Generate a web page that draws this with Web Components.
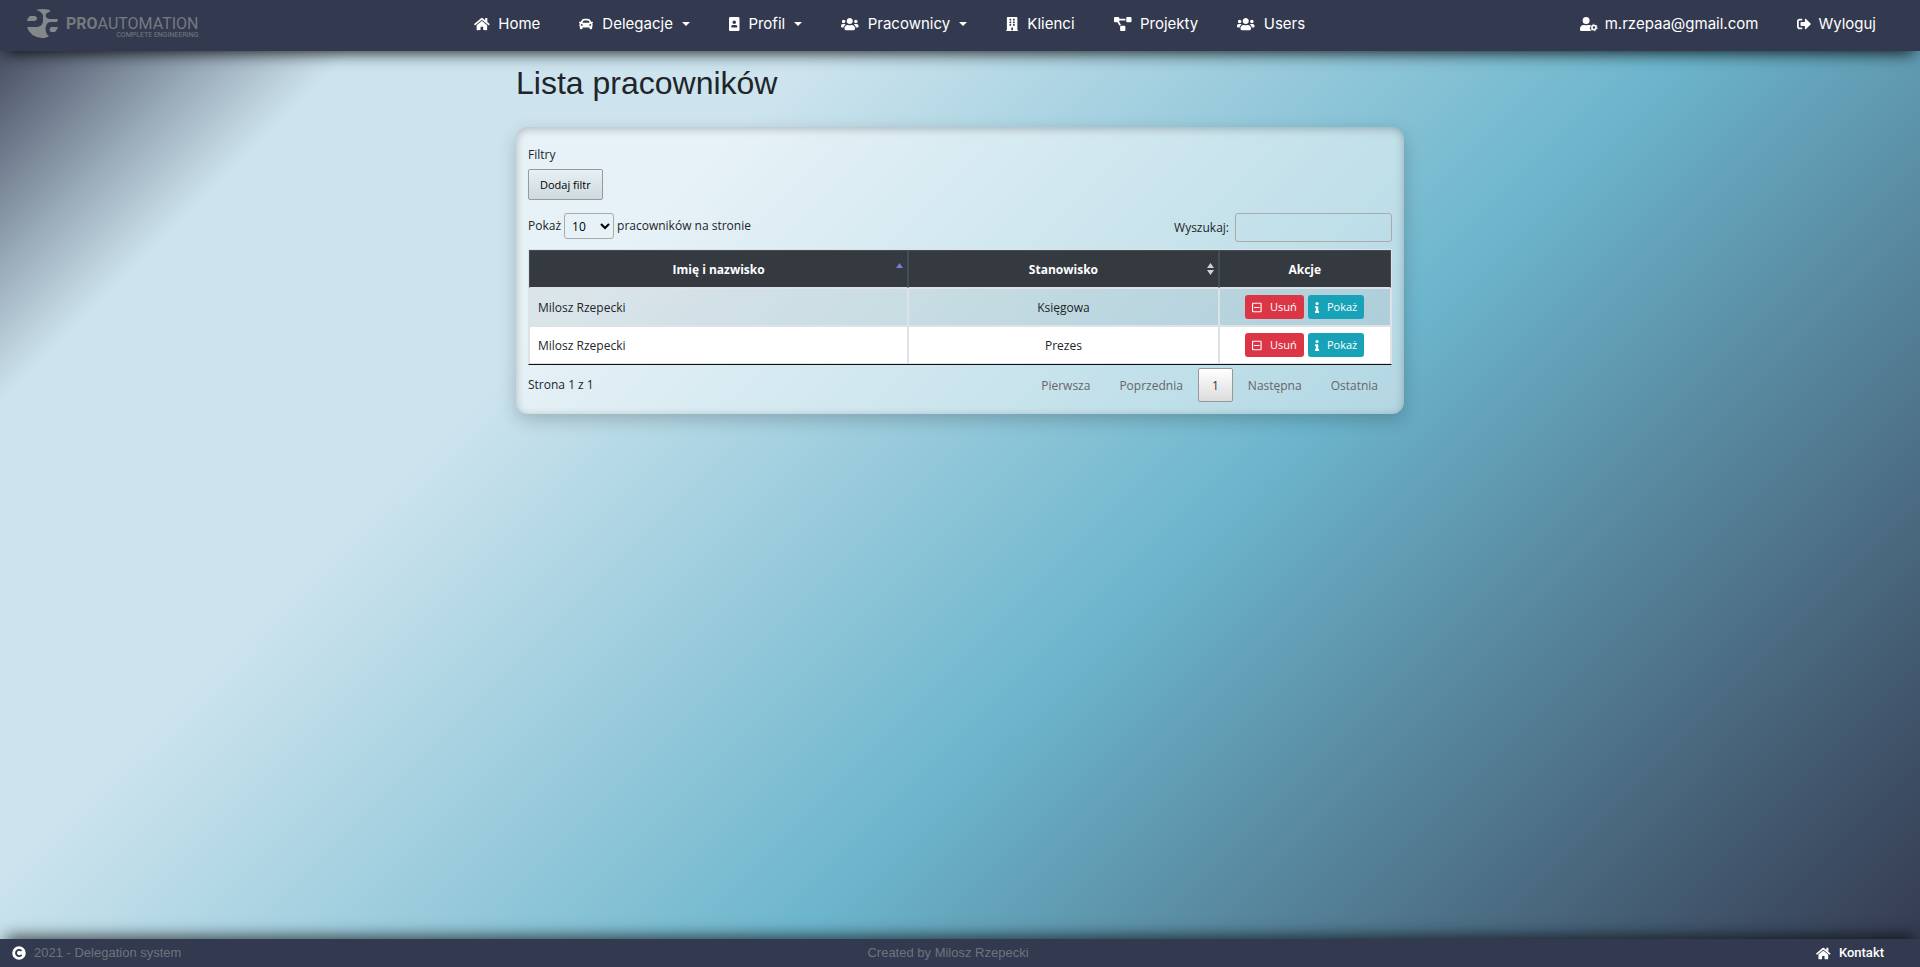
<!DOCTYPE html>
<html lang="pl">
<head>
<meta charset="utf-8">
<title>Lista pracowników</title>
<style>
  html { height: 100%; }
  body {
    margin: 0;
    min-height: 100vh;
    display: flex;
    flex-direction: column;
    font: 12px/18px "Open Sans", "Noto Sans", sans-serif;
    color: #212529;
    background: linear-gradient(135deg, #33384e 0%, #cde4ee 14%, #cde4ee 30%, #6cb5cc 60%, #33384e 100%);
  }
</style>
</head>
<body>
<top-nav></top-nav>
<page-main heading="Lista pracowników">
  <employee-panel></employee-panel>
</page-main>
<page-footer></page-footer>

<script>
const ICONS = {
  home: ['0 0 576 512', '<path d="M280.37 148.26L96 300.11V464a16 16 0 0 0 16 16l112.06-.29a16 16 0 0 0 15.92-16V368a16 16 0 0 1 16-16h64a16 16 0 0 1 16 16v95.64a16 16 0 0 0 16 16.05L464 480a16 16 0 0 0 16-16V300L295.67 148.26a12.19 12.19 0 0 0-15.3 0zM571.6 251.47L488 182.56V44.05a12 12 0 0 0-12-12h-56a12 12 0 0 0-12 12v72.61L318.47 43a48 48 0 0 0-61 0L4.34 251.47a12 12 0 0 0-1.6 16.9l25.5 31A12 12 0 0 0 45.15 301l235.22-193.74a12.19 12.19 0 0 1 15.3 0L530.9 301a12 12 0 0 0 16.9-1.6l25.5-31a12 12 0 0 0-1.7-16.93z"/>'],
  car: ['0 0 512 512', '<path d="M499.99 176h-59.87l-16.64-41.6C406.38 91.63 365.57 64 319.5 64h-127c-46.06 0-86.88 27.63-103.99 70.4L71.87 176H12.01C4.2 176-1.53 183.34.37 190.91l6 24C7.7 220.25 12.5 224 18.01 224h20.07C24.65 235.73 16 252.78 16 272v48c0 16.12 6.16 30.67 16 41.93V416c0 17.67 14.33 32 32 32h32c17.67 0 32-14.33 32-32v-32h256v32c0 17.67 14.33 32 32 32h32c17.67 0 32-14.33 32-32v-54.07c9.84-11.25 16-25.8 16-41.93v-48c0-19.22-8.65-36.27-22.07-48H494c5.51 0 10.31-3.75 11.64-9.09l6-24c1.89-7.57-3.84-14.91-11.65-14.91zm-352.06-17.83c7.29-18.22 24.94-30.17 44.57-30.17h127c19.63 0 37.28 11.95 44.57 30.17L384 208H128l19.93-49.83zM96 319.8c-19.2 0-32-12.76-32-31.9S76.8 256 96 256s48 28.71 48 47.85-28.8 15.95-48 15.95zm320 0c-19.2 0-48 3.19-48-15.95S396.8 256 416 256s32 12.76 32 31.9-12.8 31.9-32 31.9z"/>'],
  portrait: ['0 0 384 512', '<path d="M336 0H48C21.5 0 0 21.5 0 48v416c0 26.5 21.5 48 48 48h288c26.5 0 48-21.5 48-48V48c0-26.5-21.5-48-48-48zM192 128c35.3 0 64 28.7 64 64s-28.7 64-64 64-64-28.7-64-64 28.7-64 64-64zm112 236.8c0 10.6-10 19.2-22.4 19.2H102.4C90 384 80 375.4 80 364.8v-19.2c0-31.8 30.1-57.6 67.2-57.6h5c12.3 5.1 25.7 8 39.8 8s27.6-2.9 39.8-8h5c37.1 0 67.2 25.8 67.2 57.6v19.2z"/>'],
  users: ['0 0 640 512', '<path d="M96 224c35.3 0 64-28.7 64-64s-28.7-64-64-64-64 28.7-64 64 28.7 64 64 64zm448 0c35.3 0 64-28.7 64-64s-28.7-64-64-64-64 28.7-64 64 28.7 64 64 64zm32 32h-64c-17.6 0-33.5 7.1-45.1 18.6 40.3 22.1 68.9 62 75.1 109.4h66c17.7 0 32-14.3 32-32v-32c0-35.3-28.7-64-64-64zm-256 0c61.9 0 112-50.1 112-112S381.9 32 320 32 208 82.1 208 144s50.1 112 112 112zm76.8 32h-8.3c-20.8 10-43.9 16-68.5 16s-47.6-6-68.5-16h-8.3C179.6 288 128 339.6 128 403.2V432c0 26.5 21.5 48 48 48h288c26.5 0 48-21.5 48-48v-28.8c0-63.6-51.6-115.2-115.2-115.2zm-223.7-13.4C161.5 263.1 145.6 256 128 256H64c-35.3 0-64 28.7-64 64v32c0 17.7 14.3 32 32 32h65.9c6.3-47.4 34.9-87.3 75.2-109.4z"/>'],
  building: ['0 0 448 512', '<path fill-rule="evenodd" d="M12 480h20V24Q32 0 56 0h336q24 0 24 24v456h20q12 0 12 12v20H0v-20q0-12 12-12zM128 76v40q0 12 12 12h40q12 0 12-12V76q0-12-12-12h-40q-12 0-12 12zM256 76v40q0 12 12 12h40q12 0 12-12V76q0-12-12-12h-40q-12 0-12 12zM128 172v40q0 12 12 12h40q12 0 12-12v-40q0-12-12-12h-40q-12 0-12 12zM256 172v40q0 12 12 12h40q12 0 12-12v-40q0-12-12-12h-40q-12 0-12 12zM128 268v40q0 12 12 12h40q12 0 12-12v-40q0-12-12-12h-40q-12 0-12 12zM256 268v40q0 12 12 12h40q12 0 12-12v-40q0-12-12-12h-40q-12 0-12 12zM192 396v84h64v-84q0-12-12-12h-40q-12 0-12 12z"/>'],
  diagram: ['0 0 640 512', '<path d="M384 320H256c-17.67 0-32 14.33-32 32v128c0 17.67 14.33 32 32 32h128c17.67 0 32-14.33 32-32V352c0-17.67-14.33-32-32-32zM192 32c0-17.67-14.33-32-32-32H32C14.33 0 0 14.33 0 32v128c0 17.67 14.33 32 32 32h95.72l73.16 128.04C211.98 300.98 232.4 288 256 288h.28L192 175.51V128h224V64H192V32zM608 0H480c-17.67 0-32 14.33-32 32v128c0 17.67 14.33 32 32 32h128c17.67 0 32-14.33 32-32V32c0-17.67-14.33-32-32-32z"/>'],
  usercog: ['0 0 640 512', '<path d="M224 256a128 128 0 1 0 0-256 128 128 0 0 0 0 256zM313 288h-16a174 174 0 0 1-146 0h-16C60 288 0 348 0 422v42q0 48 48 48h352q12 0 22-5c-40-26-62-66-62-112 0-42 18-78 46-101q-40-6-93-6z"/><circle cx="510" cy="384" r="74" fill="none" stroke="currentColor" stroke-width="60"/><circle cx="510" cy="384" r="118" fill="none" stroke="currentColor" stroke-width="36" stroke-dasharray="62 61.6"/>'],
  signout: ['0 0 512 512', '<path d="M497 273L329 441c-15 15-41 4.5-41-17v-96H152c-13.3 0-24-10.7-24-24v-96c0-13.3 10.7-24 24-24h136V88c0-21.4 25.9-32 41-17l168 168c9.3 9.4 9.3 24.6 0 34zM192 436v-40c0-6.6-5.4-12-12-12H96c-17.7 0-32-14.3-32-32V160c0-17.7 14.3-32 32-32h84c6.6 0 12-5.4 12-12V76c0-6.6-5.4-12-12-12H96c-53 0-96 43-96 96v192c0 53 43 96 96 96h84c6.6 0 12-5.4 12-12z"/>'],
  copyright: ['0 0 512 512', '<path fill-rule="evenodd" d="M256 8a248 248 0 1 0 0 496 248 248 0 0 0 0-496zM373 347c-26 34-68 56-115 56-83 0-146-65-146-147 0-83 64-146 145-146 44 0 84 17 109 45l-38 50c-20-18-42-28-68-28-47 0-76 36-76 79 0 42 29 79 78 79 28 0 54-13 76-34z"/>'],
  minus: ['0 0 448 512', '<path fill-rule="evenodd" d="M48 32h352q48 0 48 48v352q0 48-48 48H48q-48 0-48-48V80q0-48 48-48zM52 84v344h344V84zM96 228h256v56H96z"/>'],
  info: ['0 0 192 512', '<path d="M20 424h20V280H20q-20 0-20-20v-40q0-20 20-20h112q20 0 20 20v204h20q20 0 20 20v48q0 20-20 20H20q-20 0-20-20v-48q0-20 20-20z"/><circle cx="96" cy="72" r="72"/>']
};

function define(name, render) {
  customElements.define(name, class extends HTMLElement {
    constructor() { super(); this.attachShadow({ mode: 'open' }); }
    connectedCallback() {
      const t = document.createElement('template');
      t.innerHTML = render(this);
      this.shadowRoot.replaceChildren(t.content.cloneNode(true));
    }
  });
}

define('app-icon', el => {
  const [box, shape] = ICONS[el.getAttribute('name')];
  return `<style>
    :host { display: inline-flex; height: var(--icon-size, 14px); flex: none; }
    svg { height: 100%; width: auto; display: block; fill: currentColor; overflow: visible; }
  </style><svg viewBox="${box}" aria-hidden="true">${shape}</svg>`;
});

define('nav-item', el => `<style>
    :host { display: block; }
    a { display: flex; align-items: center; gap: var(--nav-gap, 9px); color: #fff; text-decoration: none; white-space: nowrap; }
    .caret { border: 4px solid transparent; border-top-color: #fff; border-bottom: 0; }
  </style>
  <a href="#"><app-icon name="${el.getAttribute('icon')}"></app-icon><span><slot></slot></span>${el.hasAttribute('menu') ? '<i class="caret"></i>' : ''}</a>`);

define('brand-logo', () => `<style>
    :host { display: block; }
    a { display: flex; align-items: center; gap: 8px; color: #777a80; text-decoration: none; font-family: Roboto, sans-serif; }
    svg { display: block; width: 31px; height: 30px; }
    .words { display: flex; flex-direction: column; align-items: flex-end; padding-top: 8px; }
    .name { font-size: 16px; line-height: 14px; }
    .tag { font-size: 7px; line-height: 8px; }
  </style>
  <a href="#">
    <svg viewBox="0 0 31 30" aria-hidden="true">
      <g fill="#85888a">
        <path d="M9 1Q15-1 23 1Q24 3 20 4Q18 5 19 8Q20 10 23 10H31L30 13H24Q20 13 19 17Q18 20 19 23Q20 26 22 27Q20 29 15 29Q3 28 0 18H10Q16 17 16 12V6Q14 2 9 1Z"/>
        <path d="M3 7H8Q10 8 10 9Q10 12 7 12H0Q0 9 3 7Z"/>
        <path d="M24 18H31Q30 21 28 23H24Q21 21 24 18Z"/>
      </g>
    </svg>
    <span class="words"><span class="name"><b>PRO</b>AUTOMATION</span><span class="tag">COMPLETE ENGINEERING</span></span>
  </a>`);

define('top-nav', () => `<style>
    :host {
      display: block; position: relative; z-index: 1; background: #33394f;
      box-shadow: 0 8px 16px -6px rgba(0,0,0,.85); font: 15px/20px Inter, sans-serif;
    }
    nav { display: flex; justify-content: space-between; align-items: center; box-sizing: border-box; min-height: 51px; padding: 0 44px 3px 27px; }
    .group { display: flex; gap: 39px; }
    .user { --nav-gap: 7px; }
  </style>
  <nav aria-label="Menu">
    <brand-logo></brand-logo>
    <div class="group">
      <nav-item icon="home">Home</nav-item>
      <nav-item icon="car" menu>Delegacje</nav-item>
      <nav-item icon="portrait" menu>Profil</nav-item>
      <nav-item icon="users" menu>Pracownicy</nav-item>
      <nav-item icon="building">Klienci</nav-item>
      <nav-item icon="diagram">Projekty</nav-item>
      <nav-item icon="users">Users</nav-item>
    </div>
    <div class="group user">
      <nav-item icon="usercog">m.rzepaa@gmail.com</nav-item>
      <nav-item icon="signout">Wyloguj</nav-item>
    </div>
  </nav>`);

define('page-main', el => `<style>
    :host { display: block; flex: 1; }
    main { max-width: 888px; margin: 0 auto; padding: 12px 16px 24px; }
    h1 { margin: 0 0 24px; font: 400 32px/40px "Liberation Sans", Arial, sans-serif; }
  </style>
  <main><h1>${el.getAttribute('heading')}</h1><slot></slot></main>`);

define('action-button', el => `<style>
    :host { display: inline-block; }
    button {
      display: flex; align-items: center; gap: 8px; height: 24px; padding: 0 7px; border: 0; border-radius: 3px;
      color: #fff; font: 11px/16px "Open Sans", sans-serif; --icon-size: 11px;
      background: ${el.getAttribute('tone') === 'danger' ? '#dc3545' : '#17a2b8'};
    }
  </style><button type="button"><app-icon name="${el.getAttribute('icon')}"></app-icon><slot></slot></button>`);

define('employee-table', () => {
  const row = role => `<tr><td>Milosz Rzepecki</td><td>${role}</td><td>
    <div class="actions"><action-button tone="danger" icon="minus">Usuń</action-button><action-button icon="info">Pokaż</action-button></div></td></tr>`;
  return `<style>
    :host { display: block; }
    table { width: 100%; table-layout: fixed; border-collapse: separate; border-spacing: 0; border: 1px solid #dee2e6; border-bottom-color: #111; }
    col.name { width: 44%; } col.role { width: 36%; }
    th, td { box-sizing: border-box; height: 38px; padding: 1px 8px 0; border: 1px solid #dee2e6; text-align: center; }
    th { position: relative; background: #343a40; color: #fff; font-weight: 700; border-color: #454d55; border-bottom-color: #dee2e6; }
    td:first-child { text-align: left; }
    td:last-child { padding-top: 0; }
    tbody tr:nth-child(odd) { background: rgba(0,0,0,.05); }
    tbody tr:nth-child(even) { background: #fff; }
    .actions { display: flex; justify-content: center; gap: 4px; }
    .sort { position: absolute; right: 4px; top: 12px; width: 7px; height: 12px; display: block; }
  </style>
  <table>
    <colgroup><col class="name"><col class="role"><col></colgroup>
    <thead><tr>
      <th scope="col">Imię i nazwisko<svg class="sort" viewBox="0 0 7 12" aria-hidden="true"><path d="M0 5L3.500 0L7 5Z" fill="#7b7bd8"/></svg></th>
      <th scope="col">Stanowisko<svg class="sort" viewBox="0 0 7 12" aria-hidden="true"><path d="M0 5L3.500 0L7 5ZM0 7L3.500 12L7 7Z" fill="#d0d2d3"/></svg></th>
      <th scope="col">Akcje</th>
    </tr></thead>
    <tbody>${row('Księgowa')}${row('Prezes')}</tbody>
  </table>`;
});

define('list-pager', () => `<style>
    :host { display: flex; justify-content: space-between; padding-top: 3px; }
    .info { padding-top: 8px; }
    nav { display: flex; gap: 1px; }
    button { box-sizing: border-box; height: 34px; min-width: 35px; padding: 1px 13px 0; border: 1px solid transparent; border-radius: 2px; background: none; font: inherit; color: #666; }
    button[aria-current] { color: #333; border-color: #979797; background: linear-gradient(#fff, #dcdcdc); }
  </style>
  <div class="info">Strona 1 z 1</div>
  <nav aria-label="Strony">
    <button type="button" disabled>Pierwsza</button><button type="button" disabled>Poprzednia</button>
    <button type="button" aria-current="page">1</button>
    <button type="button" disabled>Następna</button><button type="button" disabled>Ostatnia</button>
  </nav>`);

define('employee-panel', () => `<style>
    :host {
      display: block; padding: 19px 12px 12px; border-radius: 12px; background: rgba(255,255,255,.5);
      box-shadow: 0 6px 18px rgba(0,0,0,.2), inset 0 2px 8px rgba(0,0,0,.24);
    }
    .add { display: block; box-sizing: border-box; height: 31px; margin: 5px 0 13px; padding: 0 11px; border: 1px solid #999; border-radius: 2px; background: linear-gradient(rgba(230,230,230,.1), rgba(0,0,0,.1)); font: 11px/16px "Open Sans", sans-serif; color: #000; }
    .tools { display: flex; justify-content: space-between; align-items: flex-start; margin-bottom: 7px; }
    label { display: flex; align-items: center; gap: 3px; }
    .find { gap: 6px; }
    select, input { box-sizing: border-box; border: 1px solid #aaa; border-radius: 3px; background: transparent; font: 12px/16px "Open Sans", sans-serif; color: #000; }
    select { width: 50px; height: 26px; padding: 0 3px; }
    input { width: 157px; height: 29px; padding: 4px; }
  </style>
  <div>Filtry</div>
  <button class="add" type="button">Dodaj filtr</button>
  <div class="tools">
    <label>Pokaż <select><option>10</option><option>25</option><option>50</option></select> pracowników na stronie</label>
    <label class="find">Wyszukaj: <input type="search"></label>
  </div>
  <employee-table></employee-table>
  <list-pager></list-pager>`);

define('page-footer', () => `<style>
    :host { display: block; background: #33394f; box-shadow: 0 -8px 16px -6px rgba(0,0,0,.75); font: 13px/20px "Liberation Sans", Arial, sans-serif; color: #6c757d; }
    footer { display: grid; grid-template-columns: 1fr auto 1fr; align-items: center; min-height: 28px; padding: 0 36px 0 12px; box-sizing: border-box; }
    .left, a { display: flex; align-items: center; gap: 8px; }
    .left app-icon { color: #fff; }
    a { justify-self: end; color: #fff; text-decoration: none; font-family: Roboto, sans-serif; font-weight: 500; --icon-size: 13px; }
  </style>
  <footer>
    <div class="left"><app-icon name="copyright"></app-icon>2021 - Delegation system</div>
    <div>Created by Milosz Rzepecki</div>
    <a href="#"><app-icon name="home"></app-icon>Kontakt</a>
  </footer>`);
</script>
</body>
</html>
